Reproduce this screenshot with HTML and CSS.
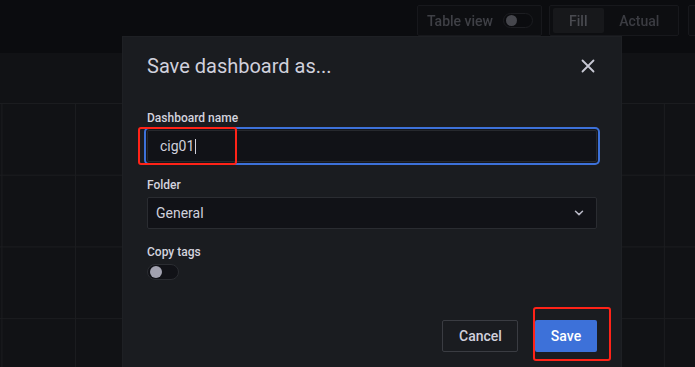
FILE: index.html
```html
<!DOCTYPE html>
<html>
<head>
<meta charset="utf-8">
<link rel="stylesheet" href="styles.css">
</head>
<body>
<div class="page">
  <header class="topbar">
    <div class="ctl-group tv">
      <span class="ctl-text">Table view</span>
      <span class="mini-switch"><span class="mini-knob"></span></span>
    </div>
    <div class="ctl-group fa">
      <span class="seg active">Fill</span>
      <span class="seg">Actual</span>
    </div>
    <div class="ctl-group more"></div>
  </header>
  <div class="spacer"></div>
  <div class="graph"></div>
</div>

<div class="modal">
  <div class="modal-head">
    <h2 class="modal-title">Save dashboard as...</h2>
    <svg class="close" width="14" height="14" viewBox="0 0 14 14">
      <path d="M1.5 1.5 L12.5 12.5 M12.5 1.5 L1.5 12.5" stroke="#c8c8d4" stroke-width="1.8" stroke-linecap="round"/>
    </svg>
  </div>
  <div class="modal-body">
    <div class="field">
      <label class="label">Dashboard name</label>
      <div class="input focused">
        <span class="value">cig01</span><span class="caret"></span>
        <span class="mark mark-input"></span>
      </div>
    </div>
    <div class="field">
      <label class="label">Folder</label>
      <div class="input select">
        <span class="value sel">General</span>
        <svg class="chev" width="10" height="6" viewBox="0 0 10 6">
          <path d="M1.5 1.2 L5 4.6 L8.5 1.2" fill="none" stroke="#b9b9c6" stroke-width="1.5" stroke-linecap="round" stroke-linejoin="round"/>
        </svg>
      </div>
    </div>
    <div class="field">
      <label class="label">Copy tags</label>
      <span class="switch"><span class="knob"></span></span>
    </div>
    <div class="footer">
      <button class="btn secondary">Cancel</button>
      <button class="btn primary">Save<span class="mark mark-save"></span></button>
    </div>
  </div>
</div>
</body>
</html>
```
FILE: styles.css
```css
* { box-sizing: border-box; }
html, body {
  margin: 0;
  padding: 0;
}
body {
  width: 695px;
  height: 367px;
  overflow: hidden;
  background: #111215;
  font-family: Roboto, "Liberation Sans", sans-serif;
  position: relative;
}
.page {
  display: flex;
  flex-direction: column;
  height: 367px;
}
.topbar {
  height: 53px;
  flex: none;
  background: #0b0c0f;
  display: flex;
  align-items: flex-start;
  padding-top: 5px;
  padding-left: 417px;
  gap: 7px;
  filter: blur(0.7px);
}
.ctl-group {
  height: 31px;
  border: 1px solid #17181c;
  border-radius: 2px;
  background: #0d0e11;
  display: flex;
  align-items: center;
  flex: none;
}
.tv {
  width: 125px;
  padding-left: 9px;
  gap: 10px;
}
.ctl-text {
  color: #3f4046;
  font-size: 14px;
  font-weight: 500;
}
.mini-switch {
  width: 30px;
  height: 15px;
  border-radius: 8px;
  border: 1px solid #1c1d21;
  background: #0b0c0f;
  display: flex;
  align-items: center;
  padding-left: 2px;
}
.mini-knob {
  width: 11px;
  height: 11px;
  border-radius: 50%;
  background: #46474d;
}
.fa {
  width: 130px;
  padding: 0 3px;
  gap: 0;
}
.seg {
  height: 25px;
  display: flex;
  align-items: center;
  justify-content: center;
  color: #3b3c42;
  font-size: 14px;
  font-weight: 500;
}
.seg.active {
  width: 51px;
  background: #17181b;
  color: #4a4b51;
  border-radius: 2px;
}
.seg:not(.active) { width: 72px; }
.more {
  width: 40px;
  margin-left: 2px;
}
.spacer {
  height: 50px;
  flex: none;
}
.graph {
  flex: 1;
  background-image:
    linear-gradient(#1b1c1f 1px, transparent 1px),
    linear-gradient(90deg, #1b1c1f 1px, transparent 1px);
  background-size: 100% 71.7px, 73.62px 100%;
  background-position: 0 0, 1.4px 0;
}

.modal {
  position: absolute;
  left: 122px;
  top: 36px;
  width: 500px;
  height: 345px;
  background: #1a1c20;
  border: 1px solid #1e2024;
  border-bottom: none;
  padding: 17px 24px 0 24px;
  color: #ccccdc;
}
.modal-head {
  display: flex;
  align-items: center;
  justify-content: space-between;
  height: 24px;
}
.modal-title {
  margin: 0;
  font-size: 20px;
  line-height: 24px;
  font-weight: 400;
  color: #d0d0dc;
}
.close {
  margin-right: 2px;
}
.modal-body {
  padding-top: 32px;
}
.field {
  margin-bottom: 15px;
}
.label {
  display: block;
  font-size: 12px;
  line-height: 16px;
  font-weight: 500;
  color: #d3d3de;
  margin-bottom: 4px;
}
.input {
  position: relative;
  height: 32px;
  background: #111217;
  border: 1px solid #2a2c31;
  border-radius: 2px;
  display: flex;
  align-items: center;
  padding-left: 12px;
  font-size: 14px;
  color: #d0d0dc;
}
.input.focused {
  box-shadow: 0 0 0 1px #15161a, 0 0 0 3px #3d71d9;
  border-color: #26282d;
}
.caret {
  display: inline-block;
  width: 1px;
  height: 15px;
  background: #d0d0dc;
  margin-left: 1px;
}
.select {
  padding-left: 8px;
  padding-right: 12px;
  justify-content: space-between;
}
.switch {
  display: flex;
  align-items: center;
  width: 32px;
  height: 16px;
  border-radius: 8px;
  background: #111217;
  border: 1px solid #2a2c31;
  padding-left: 2px;
}
.knob {
  width: 12px;
  height: 12px;
  border-radius: 50%;
  background: #a2a2b0;
}
.footer {
  display: flex;
  justify-content: flex-end;
  gap: 17px;
  margin-top: 40px;
}
.btn {
  position: relative;
  height: 32px;
  font-family: Roboto, "Liberation Sans", sans-serif;
  font-size: 14px;
  font-weight: 500;
  border-radius: 2px;
  padding: 0 16px;
  cursor: pointer;
}
.secondary {
  width: 76px;
  background: transparent;
  border: 1px solid #3a3c42;
  color: #d0d0dc;
}
.primary {
  width: 62px;
  background: #3d71d9;
  border: none;
  color: #ffffff;
  padding: 0;
}
.mark {
  position: absolute;
  border: 2px solid #ff2318;
  border-radius: 3px;
  pointer-events: none;
}
.mark-input {
  left: -10px;
  top: -4px;
  width: 99px;
  height: 38px;
}
.mark-save {
  left: -2px;
  top: -13px;
  width: 78px;
  height: 54px;
}
```
